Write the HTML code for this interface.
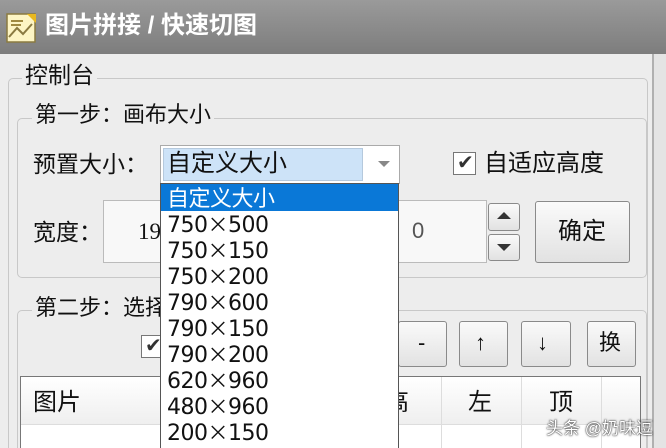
<!DOCTYPE html>
<html><head><meta charset="utf-8"><style>
*{margin:0;padding:0;box-sizing:border-box}
html,body{width:666px;height:448px;overflow:hidden}
body{background:#ededed;font-family:"Liberation Sans","Noto Sans CJK SC",sans-serif;position:relative;color:#111}
.a{position:absolute}
.t{font-size:22px;line-height:1;white-space:nowrap}
.fs{border:1px solid #c8c8c8;border-radius:5px}
.leg{background:#ededed;padding:0 3px}
.btn{border:1px solid #8a8a8a;border-radius:3px;background:linear-gradient(#fafafa,#e2e2e2);text-align:center}
.cb{width:23px;height:23px;border:1px solid #777;background:#fff}
.item{position:absolute;left:6px;font-size:22px;line-height:26px;font-family:"DejaVu Sans","Noto Sans CJK SC",sans-serif;letter-spacing:-0.5px;white-space:nowrap}
.x{font-family:"Noto Sans CJK SC",sans-serif;font-size:21px}
</style></head><body>
<div class="a" style="left:0;top:0;width:666px;height:54px;background:linear-gradient(#9a9a9a,#7d7d7d)"></div>
<svg class="a" style="left:5px;top:11px" width="34" height="34" viewBox="0 0 34 34"><rect x="2" y="3" width="28" height="28" fill="#fdf5c4" stroke="#8a7a40" stroke-width="1.5"/><path d="M6 10h12M6 14h10" stroke="#a08a40" stroke-width="2"/><path d="M4 26l8-9 6 6 9-10" stroke="#8a7a40" stroke-width="2" fill="none"/><path d="M22 3l9 0 0 9z" fill="#e8b820"/></svg>
<div class="a t" style="left:45px;top:14px;font-size:24px;font-weight:bold;color:#fff">图片拼接 / 快速切图</div>
<div class="a" style="left:652px;top:54px;width:2px;height:394px;background:#b0b0b0"></div>
<div class="a" style="left:654px;top:54px;width:12px;height:394px;background:#e4e4e4"></div>

<div class="a fs" style="left:8px;top:78px;width:640px;height:380px"></div>
<div class="a t leg" style="left:22px;top:64px;font-size:23px">控制台</div>

<div class="a fs" style="left:17px;top:118px;width:630px;height:160px"></div>
<div class="a t leg" style="left:32px;top:104px">第一步：画布大小</div>
<div class="a t" style="left:33px;top:153px;font-size:23px">预置大小：</div>

<div class="a" style="left:160px;top:145px;width:240px;height:39px;border:1px solid #aaa;background:#fff"></div>
<div class="a" style="left:163px;top:148px;width:200px;height:33px;background:#cde3f8;border:1px solid #b5c9dd"></div>
<div class="a t" style="left:167px;top:152px;font-size:24px">自定义大小</div>
<div class="a" style="left:378px;top:161px;border-left:6px solid transparent;border-right:6px solid transparent;border-top:6px solid #888"></div>

<div class="a cb" style="left:453px;top:152px"></div>
<div class="a" style="left:457px;top:153px;font-size:20px;line-height:20px;color:#333">✔</div>
<div class="a t" style="left:484px;top:152px;font-size:24px">自适应高度</div>

<div class="a t" style="left:33px;top:221px;font-size:23px">宽度：</div>
<div class="a" style="left:103px;top:200px;width:384px;height:63px;border:1px solid #bbb;background:#f8f8f8"></div>
<div class="a t" style="left:138px;top:220px;font-family:'Liberation Serif',serif;font-size:23px">19</div>
<div class="a t" style="left:412px;top:220px;color:#555">0</div>
<div class="a btn" style="left:488px;top:203px;width:32px;height:28px"></div>
<div class="a" style="left:497px;top:212px;border-left:7px solid transparent;border-right:7px solid transparent;border-bottom:7px solid #333"></div>
<div class="a btn" style="left:488px;top:234px;width:32px;height:27px"></div>
<div class="a" style="left:497px;top:244px;border-left:7px solid transparent;border-right:7px solid transparent;border-top:7px solid #333"></div>
<div class="a btn" style="left:535px;top:201px;width:95px;height:62px"></div>
<div class="a t" style="left:558px;top:220px;font-size:24px">确定</div>

<div class="a fs" style="left:17px;top:310px;width:630px;height:150px"></div>
<div class="a t leg" style="left:32px;top:297px">第二步：选择</div>
<div class="a cb" style="left:141px;top:335px"></div>
<div class="a" style="left:145px;top:336px;font-size:20px;line-height:20px;color:#333">✔</div>
<div class="a btn" style="left:398px;top:321px;width:49px;height:46px"></div>
<div class="a t" style="left:418px;top:332px">-</div>
<div class="a btn" style="left:459px;top:321px;width:49px;height:46px"></div>
<div class="a t" style="left:475px;top:332px">↑</div>
<div class="a btn" style="left:521px;top:321px;width:50px;height:46px"></div>
<div class="a t" style="left:537px;top:332px">↓</div>
<div class="a btn" style="left:587px;top:321px;width:49px;height:46px"></div>
<div class="a t" style="left:599px;top:332px">换</div>

<div class="a" style="left:20px;top:376px;width:621px;height:80px;border:1px solid #777;background:#fff"></div>
<div class="a" style="left:21px;top:377px;width:619px;height:48px;background:linear-gradient(#fff,#efefef);border-bottom:1px solid #ddd"></div>
<div class="a t" style="left:33px;top:391px;font-size:24px">图片</div>
<div class="a" style="left:441px;top:377px;width:1px;height:71px;background:#ddd"></div>
<div class="a" style="left:521px;top:377px;width:1px;height:71px;background:#ddd"></div>
<div class="a" style="left:601px;top:377px;width:1px;height:71px;background:#ddd"></div>
<div class="a t" style="left:385px;top:391px;font-size:24px">高</div>
<div class="a t" style="left:468px;top:391px;font-size:24px">左</div>
<div class="a t" style="left:549px;top:391px;font-size:24px">顶</div>

<div class="a" style="left:160px;top:183px;width:239px;height:270px;background:#fff;border:1px solid #555">
<div class="a" style="left:0;top:0;width:237px;height:27px;background:#0a78d7"></div>
<div class="item" style="top:0;color:#fff;font-family:'Noto Sans CJK SC',sans-serif">自定义大小</div>
<div class="item" style="top:27px">750<span class="x">×</span>500</div>
<div class="item" style="top:53px">750<span class="x">×</span>150</div>
<div class="item" style="top:79px">750<span class="x">×</span>200</div>
<div class="item" style="top:105px">790<span class="x">×</span>600</div>
<div class="item" style="top:131px">790<span class="x">×</span>150</div>
<div class="item" style="top:157px">790<span class="x">×</span>200</div>
<div class="item" style="top:183px">620<span class="x">×</span>960</div>
<div class="item" style="top:209px">480<span class="x">×</span>960</div>
<div class="item" style="top:235px">200<span class="x">×</span>150</div>
</div>
<div class="a t" style="left:546px;top:420px;font-size:17px;color:#fff;text-shadow:0 0 2px #333,0 0 1px #000">头条 @奶味逗</div>
</body></html>
